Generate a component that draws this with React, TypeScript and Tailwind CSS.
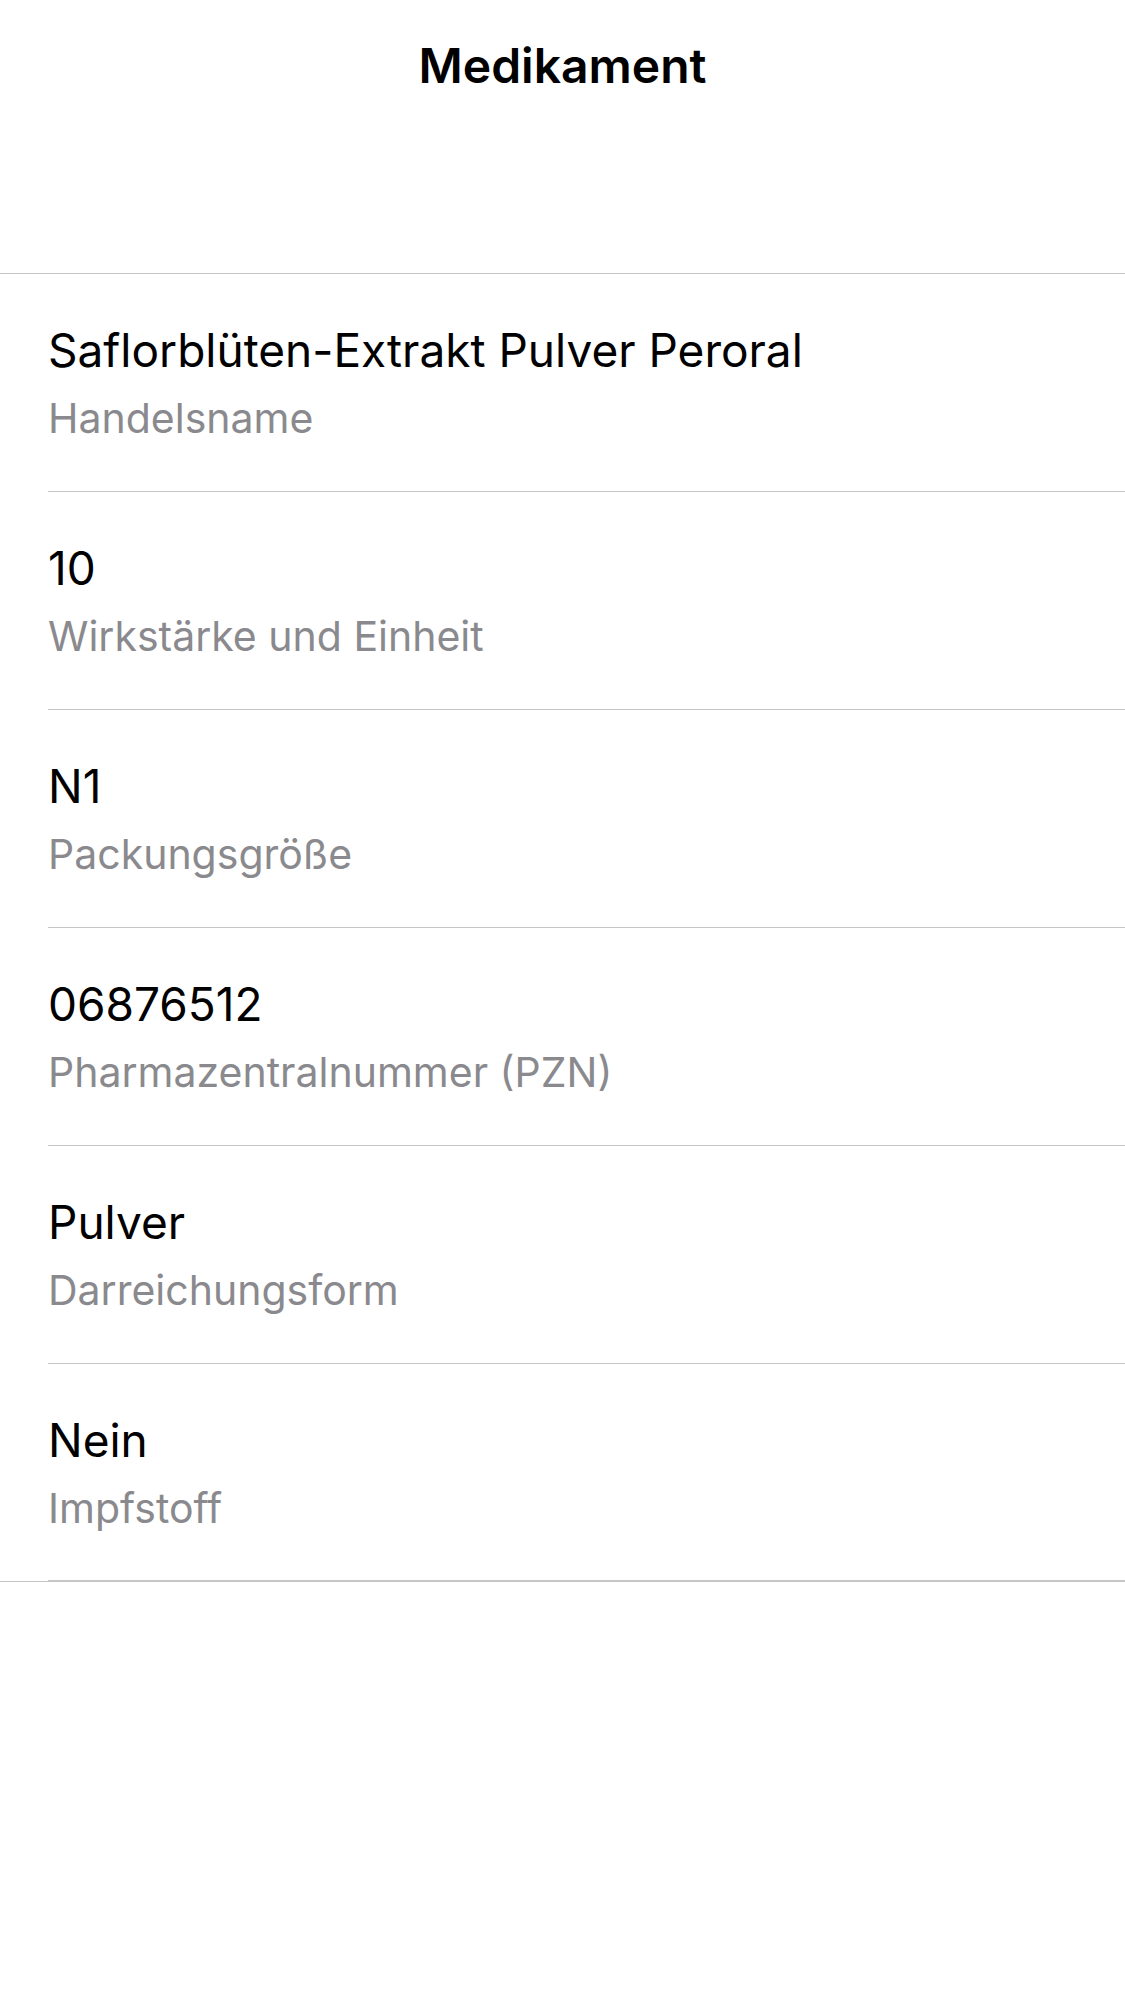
import React from 'react';

const rows = [
  { value: 'Saflorblüten-Extrakt Pulver Peroral', label: 'Handelsname' },
  { value: '10', label: 'Wirkstärke und Einheit' },
  { value: 'N1', label: 'Packungsgröße' },
  { value: '06876512', label: 'Pharmazentralnummer (PZN)' },
  { value: 'Pulver', label: 'Darreichungsform' },
  { value: 'Nein', label: 'Impfstoff' },
];

const App = () => {
  return (
    <div className="min-h-[2001px] w-[1125px] bg-white font-['Inter','Noto_Sans',sans-serif] text-black">
      <header className="h-[273px] pt-[38px]">
        <h1 className="text-center text-[48px] leading-[56px] font-semibold">Medikament</h1>
      </header>

      <section className="border-t border-[#c6c6c8]">
        {rows.map((row, i) => (
          <div key={row.label} className="pl-[48px]">
            <div
              className={
                i === rows.length - 1
                  ? 'h-[217px] pt-[48px] border-b border-[#c6c6c8]'
                  : 'h-[218px] pt-[48px] border-b border-[#c6c6c8]'
              }
            >
              <p className="text-[46px] leading-[56px]">{row.value}</p>
              <p className="mt-[15px] text-[41px] leading-[50px] text-[#8a8a8e]">{row.label}</p>
            </div>
          </div>
        ))}
        <div className="h-px bg-[#c6c6c8]" />
      </section>
    </div>
  );
};

export default App;
